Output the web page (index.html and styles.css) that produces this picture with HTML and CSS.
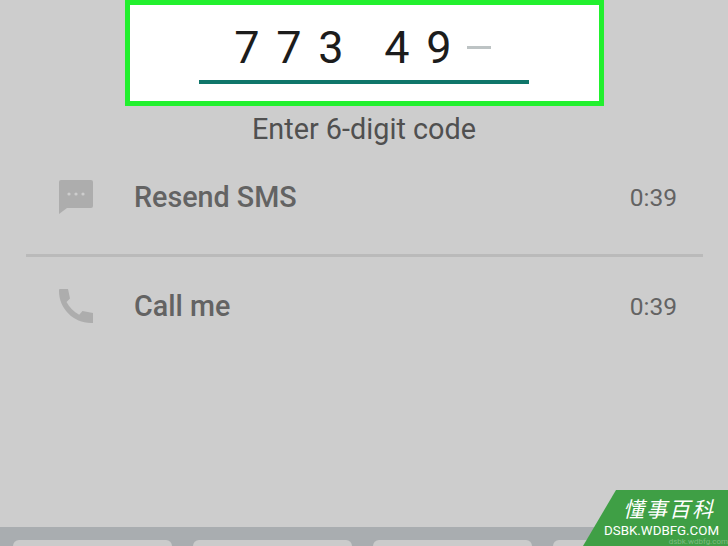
FILE: index.html
```html
<!DOCTYPE html>
<html lang="en">
<head>
    <meta charset="UTF-8">
    <meta name="viewport" content="width=device-width, initial-scale=1.0">
    <title>Enter 6-digit code</title>
    <link rel="stylesheet" href="styles.css">
</head>
<body>
    <div class="screen">
        <!-- Code entry, highlighted -->
        <div class="code-box">
            <div class="digits">
                <span class="digit">7</span>
                <span class="digit">7</span>
                <span class="digit">3</span>
                <span class="digit group-start">4</span>
                <span class="digit">9</span>
                <span class="digit"><span class="dash"></span></span>
            </div>
            <div class="underline"></div>
        </div>
        <p class="hint">Enter 6-digit code</p>

        <!-- Options -->
        <div class="option option-sms">
            <svg class="icon" viewBox="0 0 34 34">
                <path fill="#adadad" d="M2 0h30a2 2 0 0 1 2 2v24a2 2 0 0 1-2 2H8l-8 6V2a2 2 0 0 1 2-2z"/>
                <circle fill="#cdcdcd" cx="10" cy="14" r="1.6"/>
                <circle fill="#cdcdcd" cx="17" cy="14" r="1.6"/>
                <circle fill="#cdcdcd" cx="24" cy="14" r="1.6"/>
            </svg>
            <span class="label">Resend SMS</span>
            <span class="time">0:39</span>
        </div>
        <div class="divider"></div>
        <div class="option option-call">
            <svg class="icon" viewBox="0 0 34 34">
                <path fill="#adadad" d="M1 0h8l2 9.500-3.500 3.500c2.800 5.400 7.300 9.900 12.700 12.700l3.300-3.700 10.500 2V34h-2C14.500 34 0 19.500 0 2V1a1 1 0 0 1 1-1z"/>
            </svg>
            <span class="label">Call me</span>
            <span class="time">0:39</span>
        </div>

        <!-- Keyboard top edge -->
        <div class="keyboard">
            <div class="key"></div>
            <div class="key"></div>
            <div class="key"></div>
            <div class="key"></div>
        </div>
    </div>

    <!-- Watermark -->
    <div class="badge">
        <div class="badge-title">懂事百科</div>
        <div class="badge-url">DSBK.WDBFG.COM</div>
        <div class="badge-small">dsbk.wdbfg.com</div>
    </div>
</body>
</html>
```

FILE: styles.css
```css
html, body {
    margin: 0;
    padding: 0;
}

body {
    width: 728px;
    height: 546px;
    overflow: hidden;
    position: relative;
    background: #cdcdcd;
    font-family: 'Roboto', 'Liberation Sans', sans-serif;
}

.screen {
    height: 546px;
    display: flex;
    flex-direction: column;
}

.code-box {
    box-sizing: border-box;
    width: 479px;
    height: 106px;
    margin-left: 125px;
    background: #fff;
    border: 5px solid #22f02e;
    padding-top: 19px;
}

.digits {
    display: flex;
    margin-left: 96px;
    height: 48px;
    align-items: center;
}

.digit {
    width: 42px;
    text-align: center;
    font-size: 45px;
    line-height: 48px;
    color: #1c1c1c;
    display: flex;
    justify-content: center;
    align-items: center;
}

.group-start {
    margin-left: 24px;
}

.dash {
    display: block;
    width: 24px;
    height: 3px;
    margin: -2px 4px 0 0;
    flex: none;
    background: #bdc3c4;
}

.underline {
    width: 330px;
    height: 4px;
    margin: 8px 0 0 69px;
    background: #10766a;
}

.hint {
    margin: 6px 0 0;
    text-align: center;
    font-size: 28.8px;
    line-height: 34px;
    color: #505050;
}

.option {
    display: flex;
    align-items: center;
    height: 70px;
    padding: 0 51px 0 59px;
}

.option-sms {
    margin-top: 16px;
}

.option-call {
    margin-top: 14px;
}

.icon {
    width: 34px;
    height: 34px;
    flex: none;
}

.label {
    margin-left: 41px;
    font-size: 28.7px;
    font-weight: 500;
    color: #636363;
}

.time {
    margin-left: auto;
    font-size: 24.5px;
    color: #636363;
}

.divider {
    height: 3px;
    margin: 22px 25px 0 26px;
    background: #bababa;
}

.keyboard {
    margin-top: auto;
    height: 19px;
    background: #a9adb0;
    display: flex;
    gap: 21px;
    padding: 13px 0 0 13px;
    box-sizing: border-box;
    overflow: hidden;
}

.key {
    width: 159px;
    height: 20px;
    flex: none;
    background: #cbcbcb;
    border-radius: 6px 6px 0 0;
}

.badge {
    position: absolute;
    left: 583px;
    top: 490px;
    width: 145px;
    height: 56px;
    background: #3f9f45;
    clip-path: polygon(33px 0, 145px 0, 145px 56px, 0 56px);
    color: #fff;
    text-align: right;
}

.badge-title {
    font-family: 'Noto Sans CJK SC', sans-serif;
    font-size: 21px;
    line-height: 24px;
    font-style: italic;
    letter-spacing: 2px;
    padding: 6px 13px 0 0;
}

.badge-url {
    font-size: 13.3px;
    line-height: 14px;
    padding-right: 9px;
    margin-top: 4px;
    white-space: nowrap;
}

.badge-small {
    font-size: 8px;
    line-height: 8px;
    color: #7dbb80;
    white-space: nowrap;
}
```
